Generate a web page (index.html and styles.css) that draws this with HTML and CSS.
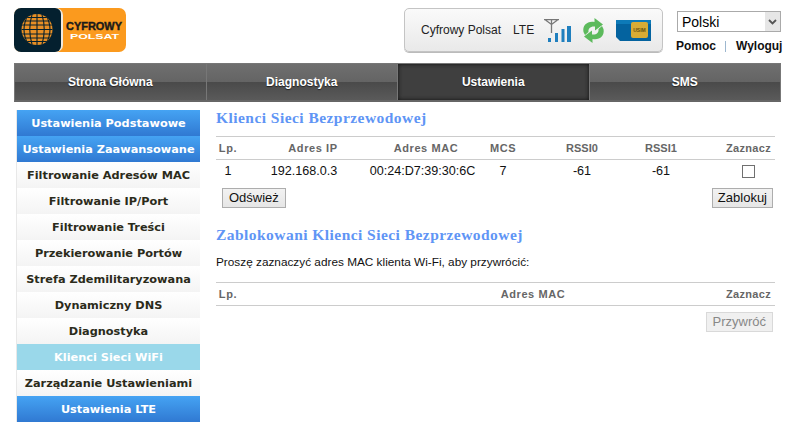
FILE: index.html
```html
<!DOCTYPE html>
<html lang="pl">
<head>
<meta charset="utf-8">
<title>Ustawienia</title>
<link rel="stylesheet" href="styles.css">
</head>
<body>
<div class="page">
  <header class="header">
    <svg class="logo" width="112" height="44" viewBox="0 0 112 44">
      <defs>
        <clipPath id="globe"><circle cx="23" cy="21.500" r="15.500"/></clipPath>
      </defs>
      <rect x="0" y="0" width="112" height="44" rx="7" fill="#fb9a1e"/>
      <path d="M7 0H42a7 7 0 0 1 7 7V37a7 7 0 0 1-7 7H7a7 7 0 0 1-7-7V7a7 7 0 0 1 7-7Z" fill="#efe9df"/>
      <path d="M7 0H41a6 6 0 0 1 6 6V38a6 6 0 0 1-6 6H7a7 7 0 0 1-7-7V7a7 7 0 0 1 7-7Z" fill="#04202f"/>
      <circle cx="23" cy="21.500" r="15.500" fill="#e88f25"/>
      <g clip-path="url(#globe)" stroke="#04202f" fill="none" stroke-width="1.100">
        <path d="M6 9.500H40M6 13H40M6 17H40M6 21.500H40M6 26H40M6 30H40M6 33.500H40"/>
        <path d="M23 5V38M18.500 5Q13 21.500 18.500 38M27.500 5Q33 21.500 27.500 38M14 7Q6 21.500 14 36M32 7Q40 21.500 32 36"/>
      </g>
      <text class="logo-top" x="52" y="22.300" textLength="56" lengthAdjust="spacingAndGlyphs">CYFROWY</text>
      <text class="logo-bottom" x="56" y="30.600" textLength="49" lengthAdjust="spacingAndGlyphs">POLSAT</text>
    </svg>
    <div class="status">
      <span class="status-name">Cyfrowy Polsat</span>
      <span class="status-net">LTE</span>
      <svg class="ic-signal" width="27" height="24" viewBox="0 0 27 24">
        <path d="M0 .700H15M1.500 1L7.500 5.500L13.500 1M7.500 1V14" fill="none" stroke="#777" stroke-width="1.300"/>
        <rect x="4" y="19" width="3" height="4" fill="#1f7fbe"/>
        <rect x="11" y="14" width="3" height="9" fill="#1f7fbe"/>
        <rect x="17.500" y="10" width="3" height="13" fill="#1f7fbe"/>
        <rect x="23" y="7" width="4" height="16" fill="#1f7fbe"/>
      </svg>
      <svg class="ic-sync" width="23" height="25" viewBox="0 0 23 25">
        <path d="M1.500 14C0 7 6 2.500 12.500 4V0L21 6.500L13 12.500V8.500C8.500 8 6 10.500 6.500 14L3 17Z" fill="#5cba5c"/>
        <path d="M21.500 11C23 18 17 22.500 10.500 21V25L2 18.500L10 12.500V16.500C14.500 17 17 14.500 16.500 11L20 8Z" fill="#5cba5c"/>
      </svg>
      <svg class="ic-sim" width="35" height="21" viewBox="0 0 35 21">
        <path d="M0 0H35V21H4L0 17Z" fill="#04639f"/>
        <path d="M0 0H35V4H0Z" fill="#0d7ab8"/>
        <rect x="15" y="2" width="17" height="16" rx="2" fill="#d8ac35"/>
        <text class="sim-text" x="23.500" y="12" text-anchor="middle">USIM</text>
      </svg>
    </div>
    <div class="user">
      <div class="lang-wrap">
        <select class="lang"><option>Polski</option></select>
        <svg class="lang-arrow" width="15" height="19" viewBox="0 0 15 19"><rect width="15" height="19" fill="#e6e6e6"/><path d="M4 8L7.500 11.500L11 8" fill="none" stroke="#555" stroke-width="1.800"/></svg>
      </div>
      <div class="user-links"><a href="#">Pomoc</a><span class="sep"></span><a href="#">Wyloguj</a></div>
    </div>
  </header>

  <nav class="nav">
    <a class="tab" href="#">Strona Główna</a>
    <a class="tab" href="#">Diagnostyka</a>
    <a class="tab active" href="#">Ustawienia</a>
    <a class="tab" href="#">SMS</a>
  </nav>

  <div class="body">
    <aside class="side">
      <a class="item blue" href="#">Ustawienia Podstawowe</a>
      <a class="item blue" href="#">Ustawienia Zaawansowane</a>
      <a class="item" href="#">Filtrowanie Adresów MAC</a>
      <a class="item" href="#">Filtrowanie IP/Port</a>
      <a class="item" href="#">Filtrowanie Treści</a>
      <a class="item" href="#">Przekierowanie Portów</a>
      <a class="item" href="#">Strefa Zdemilitaryzowana</a>
      <a class="item" href="#">Dynamiczny DNS</a>
      <a class="item" href="#">Diagnostyka</a>
      <a class="item current" href="#">Klienci Sieci WiFi</a>
      <a class="item" href="#">Zarządzanie Ustawieniami</a>
      <a class="item blue" href="#">Ustawienia LTE</a>
    </aside>
    <main class="main">
      <h2 class="title">Klienci Sieci Bezprzewodowej</h2>
      <table class="grid clients">
        <tr>
          <th class="c1">Lp.</th><th class="c2 h-ip">Adres IP</th><th class="c3">Adres MAC</th><th class="c4">MCS</th><th class="c5 tight">RSSI0</th><th class="c6 tight">RSSI1</th><th class="c7 h-sel">Zaznacz</th>
        </tr>
        <tr>
          <td class="c1">1</td><td class="c2">192.168.0.3</td><td class="c3 v-mac">00:24:D7:39:30:6C</td><td class="c4">7</td><td class="c5">-61</td><td class="c6">-61</td><td class="c7"><span class="check"></span></td>
        </tr>
      </table>
      <div class="actions">
        <button class="btn" type="button">Odśwież</button>
        <button class="btn narrow" type="button">Zablokuj</button>
      </div>
      <h2 class="title second">Zablokowani Klienci Sieci Bezprzewodowej</h2>
      <p class="hint">Proszę zaznaczyć adres MAC klienta Wi-Fi, aby przywrócić:</p>
      <table class="grid blocked">
        <tr>
          <th class="b1">Lp.</th><th class="b2">Adres MAC</th><th class="b3 h-sel">Zaznacz</th>
        </tr>
      </table>
      <div class="actions end">
        <button class="btn off" type="button" disabled>Przywróć</button>
      </div>
    </main>
  </div>
</div>
</body>
</html>
```
FILE: styles.css
```css
* { box-sizing: border-box; }
html, body { margin: 0; padding: 0; background: #fff; }
body { font: 12px "Liberation Sans", Arial, sans-serif; color: #000; overflow: hidden; }
a { text-decoration: none; color: inherit; }
.page { width: 794px; height: 433px; overflow: hidden; padding: 8px 13px 0 14px; }

.header { display: flex; height: 44px; }
.logo { display: block; flex: none; }
.logo-top { font: 700 10px "Liberation Sans", sans-serif; fill: #1a1a1a; stroke: #1a1a1a; stroke-width: .4px; }
.logo-bottom { font: 700 7px "Liberation Sans", sans-serif; fill: #fff; }

.status {
  margin-left: 278px; width: 259px; height: 44px; flex: none;
  display: flex; align-items: center; padding-left: 16px;
  border: 1px solid #c4c4c4; border-radius: 5px;
  background: linear-gradient(#fafafa, #e9e9e9);
  box-shadow: 0 1px 0 #bbb;
  font-size: 12px; color: #222;
}
.status-name { margin-right: 12px; }
.status-net { margin-right: 10px; }
.ic-signal { margin-top: 1px; margin-right: 11px; flex: none; }
.ic-sync { margin-top: 1px; margin-right: 11px; flex: none; }
.ic-sim { flex: none; }
.sim-text { font: 700 5px "Liberation Sans", sans-serif; fill: #6b5210; }

.user { margin-left: 14px; width: 104px; display: flex; flex-direction: column; }
.lang-wrap { position: relative; width: 104px; height: 21px; margin-top: 3px; }
.lang {
  display: block; width: 104px; height: 21px; appearance: none; -webkit-appearance: none;
  border: 1px solid #aaa; background: #fff; padding: 0 0 0 4px;
  font: 14px "Liberation Sans", sans-serif; color: #000; border-radius: 0;
}
.lang-arrow { position: absolute; right: 1px; top: 1px; }
.user-links { display: flex; align-items: center; margin-top: 7px; margin-left: -1px; font-weight: 700; font-size: 12px; color: #111; white-space: nowrap; }
.sep { flex: none; width: 1px; height: 11px; background: #9db7cf; margin: 0 10px 0 9px; }

.nav { display: flex; height: 39px; margin-top: 11px; width: 767px; border: 1px solid #777; border-bottom: 2px solid #666; background: #777; gap: 1px; }
.tab {
  flex: 1 1 0; display: flex; align-items: center; justify-content: center;
  font-weight: 700; font-size: 12px; color: #fff;
  text-shadow: 0 1px 1px #222;
  background: linear-gradient(#6f6f6f 0, #646464 50%, #4a4a4a 51%, #5a5a5a 100%);
}
.tab.active { background: #3f3f3f; box-shadow: inset 0 0 4px #111; }

.body { display: flex; margin-top: 8px; }
.side { width: 184px; flex: none; margin-left: 2px; border-left: 1px solid #e8e8e8; display: flex; flex-direction: column; }
.item {
  height: 26px; display: flex; align-items: center; justify-content: center; padding-top: 1px;
  font: 700 11.300px "DejaVu Sans", Verdana, sans-serif; color: #2b2b1a; white-space: nowrap;
  background: linear-gradient(#fff, #f4f4f4);
}
.item.blue { color: #fff; background: linear-gradient(#45a3f3, #3079d2); }
.item.current { color: #fff; background: #9ad8ea; }

.main { width: 559px; margin-left: 16px; flex: none; }
.title { margin: 0; height: 18px; font: 700 15.500px/16px "Liberation Serif", serif; letter-spacing: .45px; color: #5f95f5; white-space: nowrap; }
.second { margin-top: 19px; }
.grid { width: 559px; border-collapse: collapse; table-layout: fixed; }
.clients { margin-top: 8px; }
.grid th { height: 23px; padding: 0; font-weight: 700; font-size: 11px; letter-spacing: .6px; color: #666; border-top: 1px solid #ccc; border-bottom: 1px solid #ccc; }
.grid td { height: 23px; padding: 0; font-size: 12.600px; text-align: center; color: #111; }
.grid .tight { letter-spacing: 0; }
.grid .h-sel { letter-spacing: .3px; }
.c1 { width: 24px; }
.c2 { width: 128px; }
.c3 { width: 116px; }
.c4 { width: 38px; }
.c5 { width: 100px; }
.c6 { width: 78px; }
.c7 { width: 75px; }
.grid .c5 { padding-left: 20px; }
.grid .c7 { padding-left: 24px; padding-right: 2px; }
.grid .h-ip { padding-left: 18px; }
.grid .v-mac { padding-right: 7px; }
.check { display: inline-block; vertical-align: middle; width: 13px; height: 13px; border: 1px solid #707070; background: #fff; }

.actions { display: flex; justify-content: space-between; padding: 0 2px 0 6px; margin-top: 5px; }
.actions.end { justify-content: flex-end; margin-top: 6px; }
.btn { height: 20px; padding: 0 6px; border: 1px solid #adadad; background: linear-gradient(#f2f2f2, #e6e6e6); font: 13px "Liberation Sans", sans-serif; color: #111; }
.btn.narrow { padding: 0 5px; }
.btn.off { color: #888; background: #f0f0f0; border-color: #d9d9d9; }

.hint { margin: 10px 0 0; height: 14px; font-size: 11.800px; line-height: 14px; color: #111; white-space: nowrap; }
.blocked { margin-top: 13px; }
.b1 { width: 24px; text-align: center; }
.grid .b2 { text-align: center; padding-left: 126px; }
.grid .b3 { width: 75px; text-align: right; padding-right: 4px; }
```
